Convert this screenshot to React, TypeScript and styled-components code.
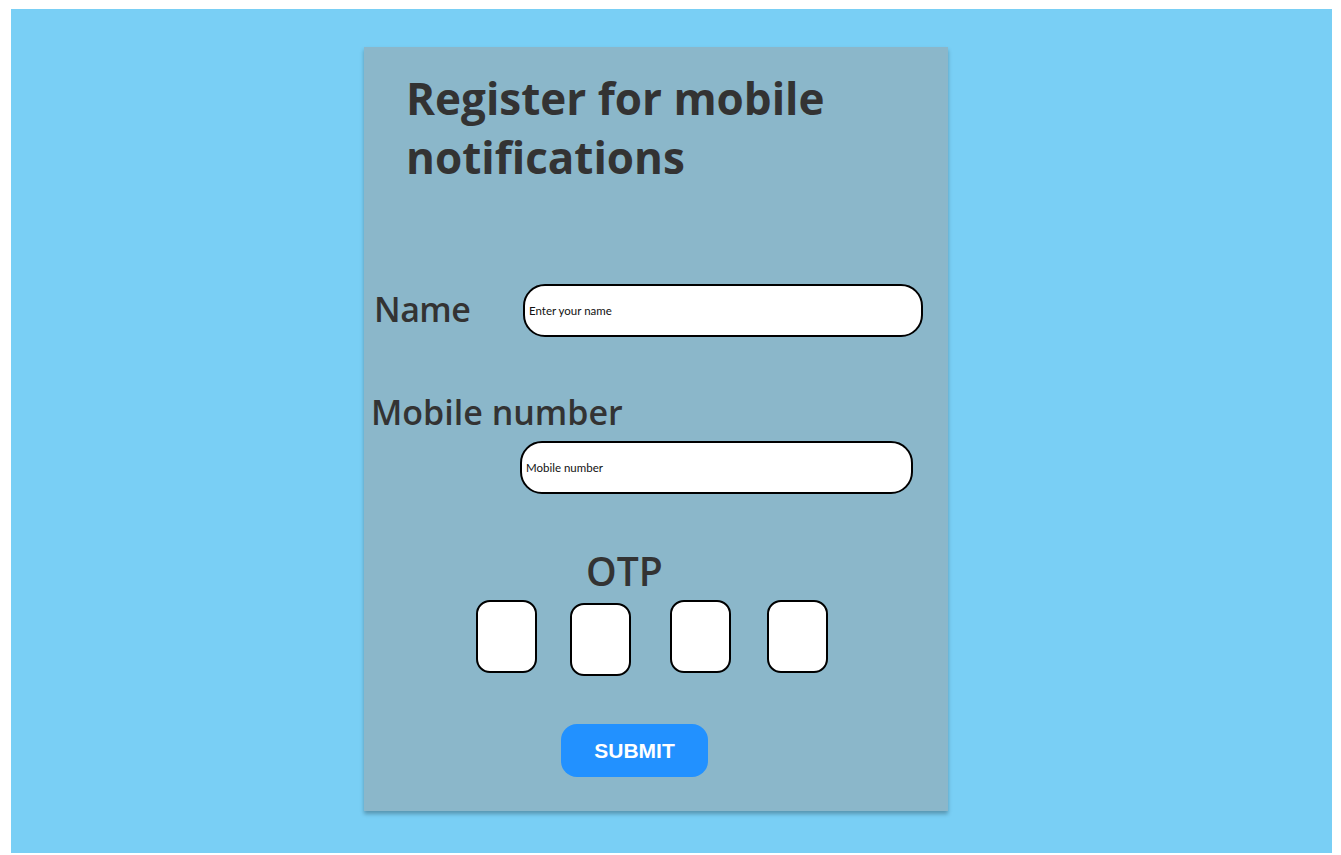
import React from 'react'
import styled, { createGlobalStyle } from 'styled-components'

const GlobalStyle = createGlobalStyle`
  html, body {
    margin: 0;
    padding: 0;
    background: #ffffff;
  }
  body {
    font-family: "Open Sans", "Noto Sans", sans-serif;
  }
`

const Page = styled.div`
  margin: 9px 9px 2px 11px;
  height: 844px;
  background-color: #79cff5;
  overflow: hidden;
`

const Card = styled.form`
  box-sizing: border-box;
  display: flex;
  flex-direction: column;
  align-items: flex-start;
  width: 584px;
  height: 764px;
  margin: 38px 0 0 353px;
  padding: 22px 0 0 10px;
  background-color: #8bb7ca;
  box-shadow: 0 3px 4px rgba(0, 0, 0, 0.28);
`

const Title = styled.h1`
  margin: 0 0 0 32px;
  padding: 0;
  font-size: 44px;
  line-height: 59px;
  font-weight: 700;
  color: #333333;
`

const Label = styled.label`
  display: block;
  font-size: 34px;
  line-height: 40px;
  font-weight: 600;
  color: #333333;
`

const NameRow = styled.div`
  display: flex;
  align-items: flex-start;
  margin-top: 97px;
`

const NameLabel = styled(Label)`
  width: 149px;
  margin-top: 5px;
  letter-spacing: -0.5px;
`

const MobileLabel = styled(Label)`
  margin: 55px 0 0 -3px;
`

const TextInput = styled.input<{ $width: number }>`
  box-sizing: border-box;
  width: ${({ $width }) => $width}px;
  height: 53px;
  padding: 0 0 0 4px;
  border: 2px solid #000000;
  border-radius: 22px;
  background: #ffffff;
  font-family: Lato, "Noto Sans", sans-serif;
  font-size: 11.5px;
  color: #111111;
  outline: none;
  &::placeholder {
    color: #111111;
  }
`

const MobileInput = styled(TextInput)`
  margin: 9px 0 0 146px;
`

const OtpLabel = styled(Label)`
  margin: 54px 0 0 212px;
  font-size: 39px;
  line-height: 46px;
`

const OtpRow = styled.div`
  display: flex;
  align-items: flex-start;
  gap: 37px;
  margin: 6px 0 0 102px;
`

const OtpBox = styled.input<{ $dx?: number; $dy?: number }>`
  box-sizing: border-box;
  width: 61px;
  height: 73px;
  margin: ${({ $dy = 0 }) => $dy}px 0 0 ${({ $dx = 0 }) => $dx}px;
  border: 2px solid #000000;
  border-radius: 14px;
  background: #ffffff;
  outline: none;
  text-align: center;
  font-size: 24px;
`

const SubmitButton = styled.button`
  width: 147px;
  height: 53px;
  margin: 48px 0 0 187px;
  border: none;
  border-radius: 16px;
  background-color: #2291ff;
  color: #ffffff;
  font-family: "Liberation Sans", Arial, sans-serif;
  font-size: 21px;
  font-weight: 700;
  cursor: pointer;
`

export default function App() {
  return (
    <>
      <GlobalStyle />
      <Page>
        <Card onSubmit={(e) => e.preventDefault()}>
          <Title>
            Register for mobile
            <br />
            notifications
          </Title>

          <NameRow>
            <NameLabel htmlFor="name">Name</NameLabel>
            <TextInput id="name" $width={400} placeholder="Enter your name" />
          </NameRow>

          <MobileLabel htmlFor="mobile">Mobile number</MobileLabel>
          <MobileInput id="mobile" $width={393} placeholder="Mobile number" />

          <OtpLabel>OTP</OtpLabel>
          <OtpRow>
            <OtpBox maxLength={1} />
            <OtpBox maxLength={1} $dx={-4} $dy={3} />
            <OtpBox maxLength={1} $dx={2} />
            <OtpBox maxLength={1} $dx={-1} />
          </OtpRow>

          <SubmitButton type="submit">SUBMIT</SubmitButton>
        </Card>
      </Page>
    </>
  )
}
